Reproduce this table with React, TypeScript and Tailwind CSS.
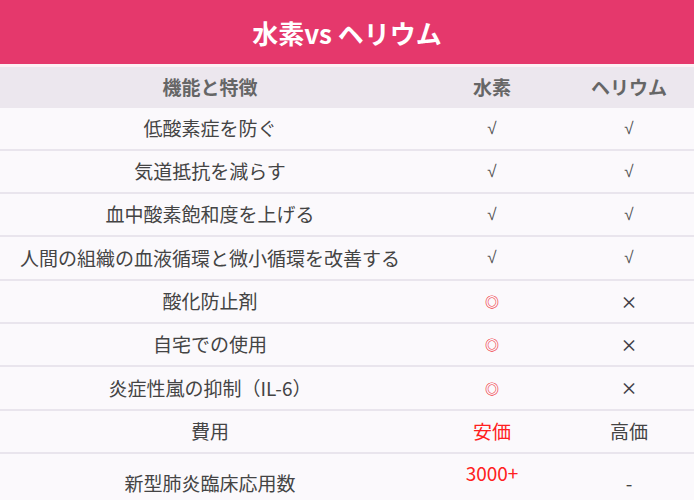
type Row = { label: string; h2: string; he: string; kind: 'check' | 'circle' | 'price' };

const rows: Row[] = [
  { label: '低酸素症を防ぐ', h2: '√', he: '√', kind: 'check' },
  { label: '気道抵抗を減らす', h2: '√', he: '√', kind: 'check' },
  { label: '血中酸素飽和度を上げる', h2: '√', he: '√', kind: 'check' },
  { label: '人間の組織の血液循環と微小循環を改善する', h2: '√', he: '√', kind: 'check' },
  { label: '酸化防止剤', h2: '◎', he: '×', kind: 'circle' },
  { label: '自宅での使用', h2: '◎', he: '×', kind: 'circle' },
  { label: '炎症性嵐の抑制（IL-6）', h2: '◎', he: '×', kind: 'circle' },
  { label: '費用', h2: '安価', he: '高価', kind: 'price' },
];

const checkClass = "text-center text-[17px] text-[#555] font-['Liberation_Sans',sans-serif]";

const h2Class = {
  check: checkClass,
  circle: 'text-center text-[14px] font-bold text-[#f0303a]',
  price: 'text-center text-[#ff2020]',
};

const heClass = {
  check: checkClass,
  circle: 'text-center text-[17px] font-medium text-[#3f3f46]',
  price: 'text-center',
};

const App = () => {
  return (
    <div
      className="w-[694px] h-[500px] overflow-hidden bg-[#fbf9fc]"
      style={{ fontFamily: '"Noto Sans CJK JP", "Noto Sans", sans-serif' }}
    >
      {/* タイトル */}
      <div className="h-[64px] bg-[#e5386c] flex items-center justify-center text-white text-[26px] font-bold">
        水素vs ヘリウム
      </div>
      <div className="h-[3px] bg-[#fdf0f4]" />

      {/* 表ヘッダー */}
      <div className="grid grid-cols-[420px_144px_130px] h-[41px] items-center bg-[#ece7ee] text-[#666] text-[19px] font-bold">
        <div className="text-center">機能と特徴</div>
        <div className="text-center">水素</div>
        <div className="text-center">ヘリウム</div>
      </div>

      {rows.map((r, i) => (
        <div
          key={r.label}
          className={`grid grid-cols-[420px_144px_130px] items-center border-b-2 border-[#e9e5ed] text-[#444] text-[19px] ${
            i === 3 || i === 6 ? 'h-[44px]' : 'h-[43px]'
          }`}
        >
          <div className="text-center">{r.label}</div>
          <div className={h2Class[r.kind]}>{r.h2}</div>
          <div className={heClass[r.kind]}>{r.he}</div>
        </div>
      ))}

      {/* 最終行 */}
      <div className="grid grid-cols-[420px_144px_130px] h-[60px] items-start pt-[15px] text-[#444] text-[19px]">
        <div className="text-center">新型肺炎臨床応用数</div>
        <div className="text-center text-[#ff2020] -mt-[10px]">3000+</div>
        <div className="text-center">-</div>
      </div>
    </div>
  );
};

export default App;
